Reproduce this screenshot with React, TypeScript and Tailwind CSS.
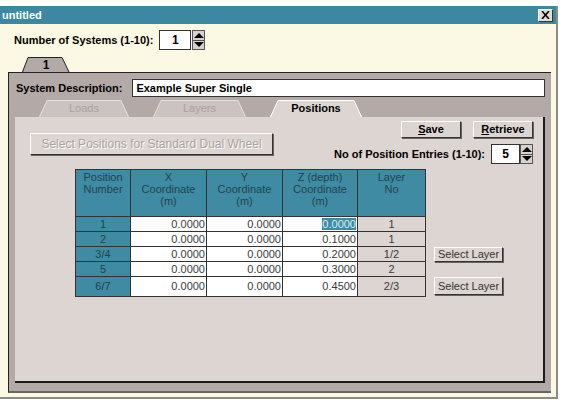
import React from 'react'

const rows = [
  { pos: '1', x: '0.0000', y: '0.0000', z: '0.0000', layer: '1' },
  { pos: '2', x: '0.0000', y: '0.0000', z: '0.1000', layer: '1' },
  { pos: '3/4', x: '0.0000', y: '0.0000', z: '0.2000', layer: '1/2' },
  { pos: '5', x: '0.0000', y: '0.0000', z: '0.3000', layer: '2' },
  { pos: '6/7', x: '0.0000', y: '0.0000', z: '0.4500', layer: '2/3' },
]

const headers = [
  ['Position', 'Number'],
  ['X', 'Coordinate', '(m)'],
  ['Y', 'Coordinate', '(m)'],
  ['Z (depth)', 'Coordinate', '(m)'],
  ['Layer', 'No'],
]

const Spinner = () => (
  <div className="flex h-[20px] w-[13px] flex-col border border-[#555] bg-[#d8d2cf]">
    <div className="flex flex-1 items-center justify-center border-b border-[#555]">
      <div className="h-0 w-0 border-x-[5px] border-b-[5px] border-x-transparent border-b-black" />
    </div>
    <div className="flex flex-1 items-center justify-center">
      <div className="h-0 w-0 border-x-[5px] border-t-[5px] border-x-transparent border-t-black" />
    </div>
  </div>
)

const Tab = ({
  label,
  width,
  fill,
  active,
}: {
  label: string
  width: number
  fill: string
  active?: boolean
}) => (
  <div className="relative flex h-[17px] items-center justify-center" style={{ width }}>
    <svg className="absolute inset-0" width={width} height={17} viewBox={`0 0 ${width} 17`}>
      <path d={`M0 17 L8 1 L${width - 8} 1 L${width} 17 Z`} fill={fill} />
      <path
        d={`M0.5 17 L8 0.5 L${width - 8} 0.5 L${width - 0.5} 17`}
        fill="none"
        stroke={active ? '#ffffff' : '#e6e0de'}
        strokeWidth="1"
      />
    </svg>
    <span
      className={`relative text-[11px] ${active ? 'font-bold text-black' : 'text-[#aaa29f]'}`}
    >
      {label}
    </span>
  </div>
)

const WinButton = ({ children, className = '' }: { children: React.ReactNode; className?: string }) => (
  <button
    className={`flex items-center justify-center border border-t-white border-l-white border-r-[#333] border-b-[#333] bg-[#ddd5d2] shadow-[1px_1px_0_#666] ${className}`}
  >
    {children}
  </button>
)

export default function App() {
  return (
    <div className="h-[403px] w-[566px] overflow-hidden bg-white font-['Liberation_Sans',Arial,sans-serif] text-black">
      <div className="mt-[6px] flex h-[393px] w-[558px] flex-col border-r-2 border-b-2 border-[#8e8a84] bg-[#fbf8e3]">
        {/* Title bar */}
        <div className="flex h-[18px] items-center justify-between bg-[#3d88a1] pl-[2px] pr-[3px]">
          <span className="text-[11px] font-bold text-white">untitled</span>
          <div className="flex h-[13px] w-[15px] items-center justify-center border border-t-white border-l-white border-r-[#333] border-b-[#333] bg-[#e0dcd8]">
            <svg width="9" height="8" viewBox="0 0 9 8">
              <path d="M1 0 L8 8 M8 0 L1 8" stroke="black" strokeWidth="1.6" />
            </svg>
          </div>
        </div>

        {/* Number of systems */}
        <div className="flex items-center gap-[6px] pl-[14px] pt-[6px]">
          <span className="text-[11px] font-bold">Number of Systems (1-10):</span>
          <div className="flex items-center gap-[1px]">
            <div className="flex h-[20px] w-[32px] items-center justify-center border border-[#333] bg-white text-[12px] font-bold">
              1
            </div>
            <Spinner />
          </div>
        </div>

        {/* Tab "1" */}
        <div className="ml-[22px] mt-[7px] flex">
          <div className="relative flex h-[15px] w-[48px] items-center justify-center">
            <svg className="absolute inset-0" width="48" height="15" viewBox="0 0 48 15">
              <path d="M0 15 L6 1 L40 1 L47 15 Z" fill="#b3a9a7" />
              <path d="M0.5 15 L6 0.5 L40 0.5 L47 15" fill="none" stroke="#222" strokeWidth="1" />
            </svg>
            <span className="relative text-[12px] font-bold">1</span>
          </div>
        </div>

        {/* Gray outer panel */}
        <div className="mb-[4px] ml-[8px] mr-[5px] flex flex-1 flex-col border-t border-l border-b-2 border-t-[#222] border-l-[#222] border-b-[#6c6462] bg-[#b3a9a7]">
          <div className="flex items-center gap-[10px] pl-[7px] pr-[6px] pt-[6px]">
            <span className="text-[11px] font-bold">System Description:</span>
            <div className="flex h-[18px] flex-1 items-center border border-[#333] bg-white px-[3px] text-[11px] font-bold">
              Example Super Single
            </div>
          </div>

          {/* Sub tabs */}
          <div className="mt-[3px] flex gap-[24px] pl-[30px]">
            <Tab label="Loads" width={90} fill="#cbc3c1" />
            <Tab label="Layers" width={93} fill="#cbc3c1" />
            <Tab label="Positions" width={92} fill="#ddd5d2" active />
          </div>

          {/* Inner panel */}
          <div className="mb-[8px] ml-[6px] mr-[6px] flex flex-1 flex-col border-r-2 border-b-2 border-[#1c1c1c] bg-[#ddd5d2]">
            <div className="flex justify-between">
              <div className="pl-[15px] pt-[16px]">
                <WinButton className="h-[22px] w-[243px] text-[12px] text-[#aaa29f] [text-shadow:1px_1px_0_#fff]">
                  Select Positions for Standard Dual Wheel
                </WinButton>
              </div>
              <div className="flex flex-col items-end pr-[10px] pt-[4px]">
                <div className="flex gap-[12px]">
                  <WinButton className="h-[17px] w-[60px] text-[11px] font-bold">
                    <span>
                      <u>S</u>ave
                    </span>
                  </WinButton>
                  <WinButton className="h-[17px] w-[60px] text-[11px] font-bold">
                    <span>
                      <u>R</u>etrieve
                    </span>
                  </WinButton>
                </div>
                <div className="mt-[6px] flex items-center gap-[6px]">
                  <span className="text-[11px] font-bold">No of Position Entries (1-10):</span>
                  <div className="flex items-center">
                    <div className="flex h-[20px] w-[29px] items-center justify-center border border-[#333] bg-white text-[12px] font-bold">
                      5
                    </div>
                    <Spinner />
                  </div>
                </div>
              </div>
            </div>

            {/* Table + select layer buttons */}
            <div className="ml-[60px] mt-[5px] flex items-start gap-[8px]">
              <div className="grid grid-cols-[54px_75px_75px_74px_67px] grid-rows-[46px_14px_14px_14px_14px_19px] gap-px border border-[#333] bg-[#333] text-[11px]">
                {headers.map((lines, i) => (
                  <div key={i} className="bg-[#3f8ba4] pt-[1px] text-center leading-[12px] text-[#23434c]">
                    {lines.map((l, j) => (
                      <div key={j}>{l}</div>
                    ))}
                  </div>
                ))}
                {rows.map((r, i) => (
                  <React.Fragment key={r.pos}>
                    <div className="flex items-center justify-center bg-[#3f8ba4] text-[#23434c]">{r.pos}</div>
                    <div className="flex items-center justify-end bg-white pr-[1px] text-[#3a3a3a]">{r.x}</div>
                    <div className="flex items-center justify-end bg-white pr-[1px] text-[#3a3a3a]">{r.y}</div>
                    <div className="flex items-center justify-end bg-white pr-[1px] text-[#3a3a3a]">
                      {i === 0 ? (
                        <span className="bg-[#3f8ba4] leading-[12px] text-[#d6eef4]">{r.z}</span>
                      ) : (
                        r.z
                      )}
                    </div>
                    <div className="flex items-center justify-center bg-[#ddd5d2] text-[#3a3a3a]">{r.layer}</div>
                  </React.Fragment>
                ))}
              </div>
              <div className="flex flex-col pt-[78px]">
                <WinButton className="h-[15px] w-[69px] text-[11px] text-[#333]">Select Layer</WinButton>
                <WinButton className="mt-[15px] h-[18px] w-[69px] text-[11px] text-[#333]">
                  Select Layer
                </WinButton>
              </div>
            </div>
          </div>
        </div>
      </div>
    </div>
  )
}
